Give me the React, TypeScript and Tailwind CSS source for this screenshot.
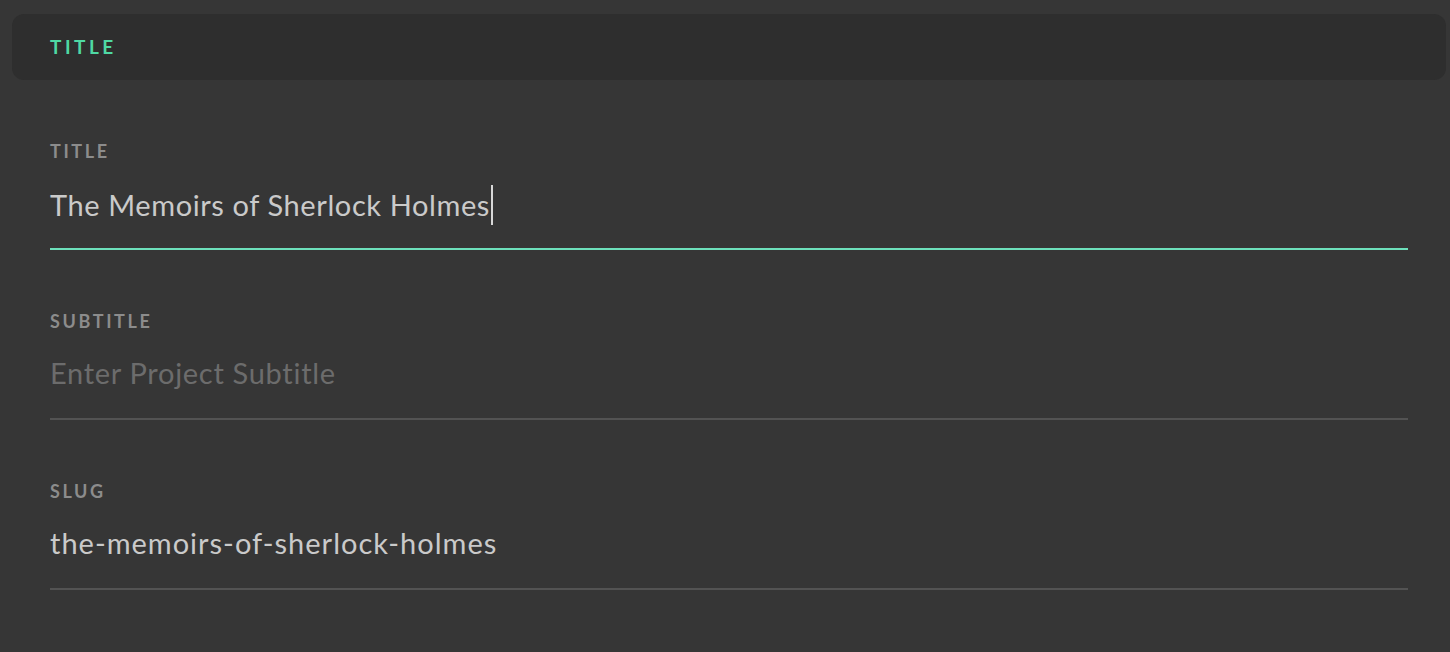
import React from 'react';

interface FieldProps {
  label: string;
  value?: string;
  placeholder?: string;
  focused?: boolean;
}

function Field({ label, value, placeholder, focused }: FieldProps) {
  return (
    <div className="pt-[61px]">
      <div className="text-[18px] leading-[20px] font-bold tracking-[2.6px] text-[#8c8c8c] uppercase">{label}</div>
      <div
        className={
          'mt-[22px] h-[67px] pt-[2px] flex items-start border-b-2 ' +
          (focused ? 'border-[#6de0bb]' : 'border-[#535353]')
        }
      >
        {value ? (
          <span
            className={
              'text-[29px] leading-[36px] text-[#cacaca] flex items-center ' +
              (focused ? 'tracking-[0.6px]' : 'tracking-[1px]')
            }
          >
            {value}
            {focused && <span className="inline-block w-[2px] h-[40px] bg-[#d8d8d8] ml-px" />}
          </span>
        ) : (
          <span className="text-[29px] leading-[36px] tracking-[0.7px] text-[#6c6c6c]">{placeholder}</span>
        )}
      </div>
    </div>
  );
}

export default function App() {
  return (
    <div
      className="min-h-screen bg-[#363636] pt-[14px] pl-[12px] pr-[4px]"
      style={{ fontFamily: 'Lato, "Open Sans", sans-serif' }}
    >
      <div className="h-[66px] rounded-[12px] bg-[#2e2e2e] flex items-center pl-[38px]">
        <span className="text-[19px] font-bold tracking-[3.5px] text-[#4fd9a4]">TITLE</span>
      </div>
      <div className="pl-[38px] pr-[38px]">
        <Field label="Title" value="The Memoirs of Sherlock Holmes" focused />
        <Field label="Subtitle" placeholder="Enter Project Subtitle" />
        <Field label="Slug" value="the-memoirs-of-sherlock-holmes" />
      </div>
    </div>
  );
}
